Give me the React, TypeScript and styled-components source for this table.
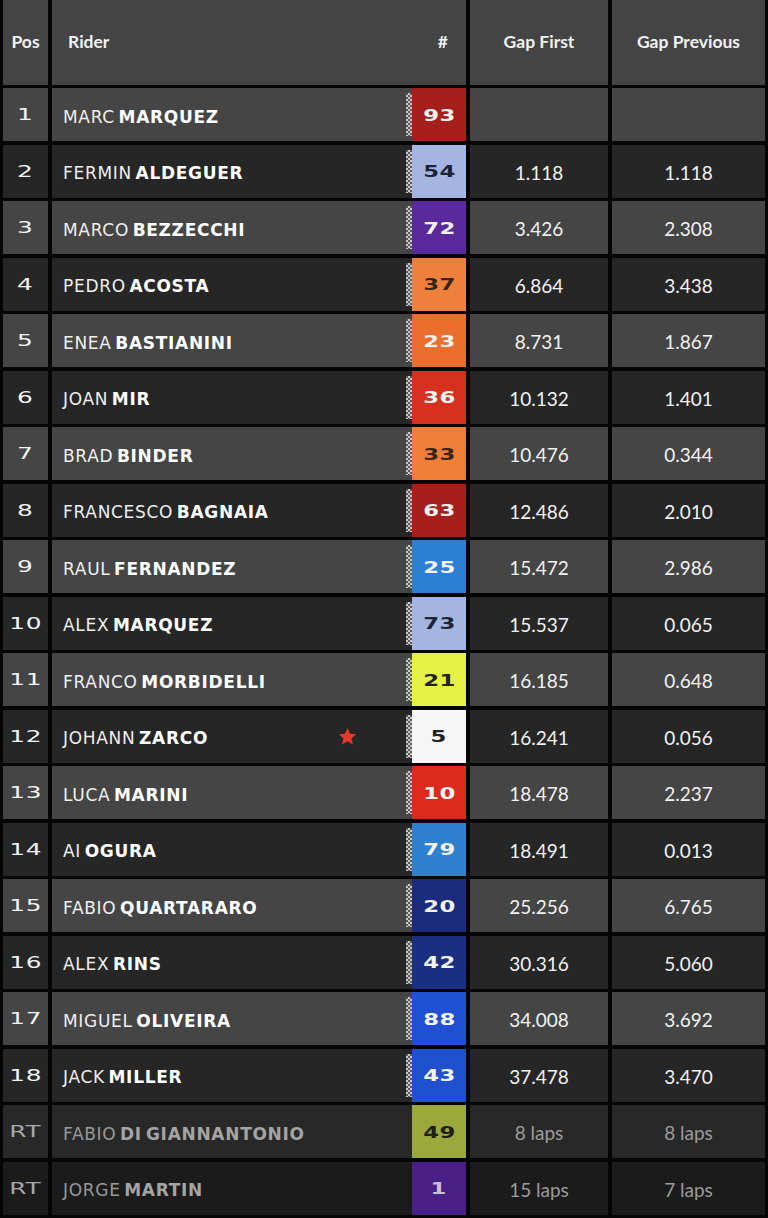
import React from "react";
import styled, { createGlobalStyle } from "styled-components";

const GlobalStyle = createGlobalStyle`
  html, body {
    margin: 0;
    padding: 0;
    background: #050505;
  }
  body {
    font-family: "Lato", "Liberation Sans", sans-serif;
  }
`;

const COLS = "45px 414px 138px 153px";

const Table = styled.div`
  width: 768px;
  height: 1218px;
  box-sizing: border-box;
  padding-left: 3px;
  background: #050505;
  display: flex;
  flex-direction: column;
  gap: 3.5px;
  overflow: hidden;
`;

const HeaderRow = styled.div`
  display: grid;
  grid-template-columns: ${COLS};
  column-gap: 4px;
  height: 84.5px;
`;

const HeadCell = styled.div<{ $align?: "left" | "center" }>`
  background: #444444;
  color: #f2f2f2;
  font-family: "Lato", sans-serif;
  font-weight: 700;
  font-size: 17.5px;
  display: flex;
  align-items: center;
  justify-content: ${(p) => (p.$align === "left" ? "flex-start" : "center")};
  padding-left: ${(p) => (p.$align === "left" ? "16px" : "0")};
  padding-bottom: 2px;
`;

const RiderHead = styled(HeadCell)`
  justify-content: space-between;
  padding-right: 18px;
`;

const Row = styled.div`
  display: grid;
  grid-template-columns: ${COLS};
  column-gap: 4px;
  height: 53px;
`;

const Cell = styled.div<{ $bg: string }>`
  background: ${(p) => p.$bg};
  display: flex;
  align-items: center;
  justify-content: center;
`;

const PosText = styled.span<{ $dim: boolean }>`
  display: inline-block;
  font-family: "DejaVu Sans", sans-serif;
  font-size: 16px;
  font-weight: 400;
  color: ${(p) => (p.$dim ? "#a8a8a8" : "#f4f4f4")};
  transform: scaleX(1.55);
  letter-spacing: 0.5px;
`;

const RiderCell = styled(Cell)`
  justify-content: flex-start;
  padding-left: 11px;
`;

const Name = styled.span<{ $dim: boolean }>`
  font-family: "DejaVu Sans", sans-serif;
  font-size: 17px;
  letter-spacing: 0.7px;
  word-spacing: -2.5px;
  color: ${(p) => (p.$dim ? "#a4a4a4" : "#ffffff")};
  white-space: nowrap;
  padding-top: 4px;
`;

const First = styled.span`
  font-weight: 400;
  opacity: 0.92;
`;

const Last = styled.span`
  font-weight: 700;
`;

const Star = styled.svg`
  width: 21px;
  height: 21px;
  margin-right: 48px;
  flex-shrink: 0;
`;

const Spacer = styled.div`
  flex: 1;
`;

const Checker = styled.div<{ $show: boolean }>`
  width: 6px;
  align-self: stretch;
  margin: 5px 0;
  background: ${(p) =>
    p.$show
      ? "conic-gradient(#c8c8c8 25%, #5a5a5a 0 50%, #c8c8c8 0 75%, #5a5a5a 0) 0 0 / 4px 4px"
      : "transparent"};
`;

const Badge = styled.div<{ $bg: string; $fg: string }>`
  width: 54px;
  align-self: stretch;
  background: ${(p) => p.$bg};
  color: ${(p) => p.$fg};
  display: flex;
  align-items: center;
  justify-content: center;
`;

const BadgeNum = styled.span`
  display: inline-block;
  font-family: "DejaVu Sans", sans-serif;
  font-weight: 700;
  font-size: 16px;
  transform: scaleX(1.42);
  letter-spacing: 0.3px;
  padding-top: 1px;
`;

const Gap = styled.span<{ $dim: boolean }>`
  font-family: "Lato", sans-serif;
  font-size: 19px;
  color: ${(p) => (p.$dim ? "#9c9c9c" : "#f2f2f2")};
  padding-top: 2px;
`;

type Rider = {
  pos: string;
  first: string;
  last: string;
  num: string;
  bg: string;
  fg: string;
  gapFirst: string;
  gapPrev: string;
  star?: boolean;
};

const LIGHT = "#f4f4f4";
const DARK = "#1d2436";

const riders: Rider[] = [
  { pos: "1", first: "MARC", last: "MARQUEZ", num: "93", bg: "#a51f1b", fg: LIGHT, gapFirst: "", gapPrev: "" },
  { pos: "2", first: "FERMIN", last: "ALDEGUER", num: "54", bg: "#a4b5e2", fg: DARK, gapFirst: "1.118", gapPrev: "1.118" },
  { pos: "3", first: "MARCO", last: "BEZZECCHI", num: "72", bg: "#5a2a9c", fg: LIGHT, gapFirst: "3.426", gapPrev: "2.308" },
  { pos: "4", first: "PEDRO", last: "ACOSTA", num: "37", bg: "#ef803c", fg: "#3a2418", gapFirst: "6.864", gapPrev: "3.438" },
  { pos: "5", first: "ENEA", last: "BASTIANINI", num: "23", bg: "#ec6e2c", fg: LIGHT, gapFirst: "8.731", gapPrev: "1.867" },
  { pos: "6", first: "JOAN", last: "MIR", num: "36", bg: "#d6301f", fg: LIGHT, gapFirst: "10.132", gapPrev: "1.401" },
  { pos: "7", first: "BRAD", last: "BINDER", num: "33", bg: "#ef7e38", fg: "#3a2418", gapFirst: "10.476", gapPrev: "0.344" },
  { pos: "8", first: "FRANCESCO", last: "BAGNAIA", num: "63", bg: "#a51f1b", fg: LIGHT, gapFirst: "12.486", gapPrev: "2.010" },
  { pos: "9", first: "RAUL", last: "FERNANDEZ", num: "25", bg: "#2d7fd6", fg: LIGHT, gapFirst: "15.472", gapPrev: "2.986" },
  { pos: "10", first: "ALEX", last: "MARQUEZ", num: "73", bg: "#a4b5e2", fg: DARK, gapFirst: "15.537", gapPrev: "0.065" },
  { pos: "11", first: "FRANCO", last: "MORBIDELLI", num: "21", bg: "#e4f244", fg: "#22241a", gapFirst: "16.185", gapPrev: "0.648" },
  { pos: "12", first: "JOHANN", last: "ZARCO", num: "5", bg: "#f6f6f6", fg: "#222222", gapFirst: "16.241", gapPrev: "0.056", star: true },
  { pos: "13", first: "LUCA", last: "MARINI", num: "10", bg: "#dc2b1c", fg: LIGHT, gapFirst: "18.478", gapPrev: "2.237" },
  { pos: "14", first: "AI", last: "OGURA", num: "79", bg: "#2f80d2", fg: LIGHT, gapFirst: "18.491", gapPrev: "0.013" },
  { pos: "15", first: "FABIO", last: "QUARTARARO", num: "20", bg: "#1b2c7e", fg: LIGHT, gapFirst: "25.256", gapPrev: "6.765" },
  { pos: "16", first: "ALEX", last: "RINS", num: "42", bg: "#1a2f82", fg: LIGHT, gapFirst: "30.316", gapPrev: "5.060" },
  { pos: "17", first: "MIGUEL", last: "OLIVEIRA", num: "88", bg: "#1f4fd2", fg: LIGHT, gapFirst: "34.008", gapPrev: "3.692" },
  { pos: "18", first: "JACK", last: "MILLER", num: "43", bg: "#1f50d0", fg: LIGHT, gapFirst: "37.478", gapPrev: "3.470" },
  { pos: "RT", first: "FABIO", last: "DI GIANNANTONIO", num: "49", bg: "#9aa83c", fg: "#1e2014", gapFirst: "8 laps", gapPrev: "8 laps" },
  { pos: "RT", first: "JORGE", last: "MARTIN", num: "1", bg: "#4a1f86", fg: "#c8c0d8", gapFirst: "15 laps", gapPrev: "7 laps" },
];

const rowBg = (index: number, retired: boolean) => {
  if (retired) return index % 2 === 0 ? "#282828" : "#1b1b1b";
  return index % 2 === 0 ? "#454545" : "#262626";
};

const StarIcon = () => (
  <Star viewBox="0 0 24 24">
    <path
      d="M12 2.2l2.9 6.6 7.1.6-5.4 4.7 1.6 7-6.2-3.7-6.2 3.7 1.6-7L2 9.4l7.1-.6z"
      fill="#e5392c"
    />
  </Star>
);

const App: React.FC = () => {
  return (
    <>
      <GlobalStyle />
      <Table>
        <HeaderRow>
          <HeadCell>Pos</HeadCell>
          <RiderHead $align="left">
            <span>Rider</span>
            <span>#</span>
          </RiderHead>
          <HeadCell>Gap First</HeadCell>
          <HeadCell>Gap Previous</HeadCell>
        </HeaderRow>

        {riders.map((r, index) => {
          const retired = r.pos === "RT";
          const bg = rowBg(index, retired);
          return (
            <Row key={index}>
              <Cell $bg={bg}>
                <PosText $dim={retired}>{r.pos}</PosText>
              </Cell>
              <RiderCell $bg={bg}>
                <Name $dim={retired}>
                  <First>{r.first}</First> <Last>{r.last}</Last>
                </Name>
                <Spacer />
                {r.star && <StarIcon />}
                <Checker $show={!retired} />
                <Badge $bg={r.bg} $fg={r.fg}>
                  <BadgeNum>{r.num}</BadgeNum>
                </Badge>
              </RiderCell>
              <Cell $bg={bg}>
                <Gap $dim={retired}>{r.gapFirst}</Gap>
              </Cell>
              <Cell $bg={bg}>
                <Gap $dim={retired}>{r.gapPrev}</Gap>
              </Cell>
            </Row>
          );
        })}
      </Table>
    </>
  );
};

export default App;
